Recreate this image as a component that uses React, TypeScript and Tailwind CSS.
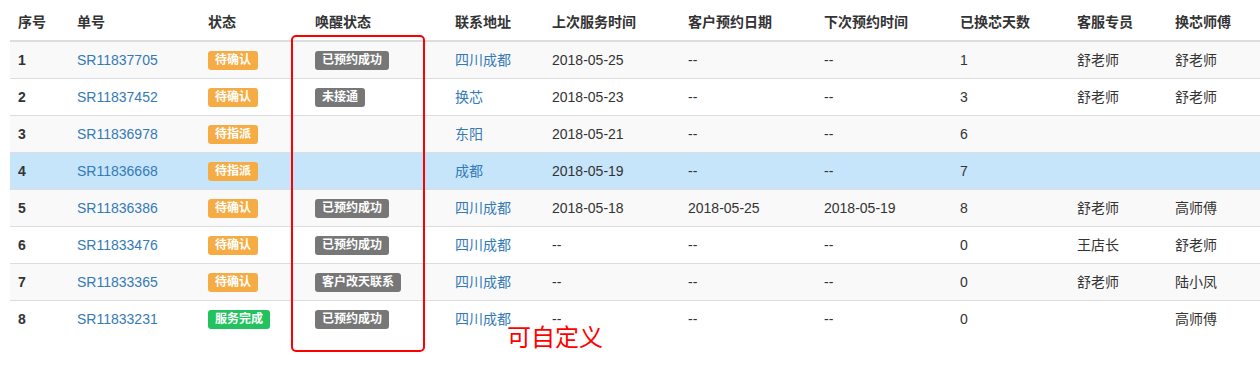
const font = { fontFamily: '"Liberation Sans", "Noto Sans CJK SC", sans-serif' };

type Row = {
  no: number;
  sr: string;
  status: string;
  wake?: string;
  addr: string;
  last: string;
  booked: string;
  next: string;
  days: number;
  cs?: string;
  tech?: string;
};

const rows: Row[] = [
  { no: 1, sr: 'SR11837705', status: '待确认', wake: '已预约成功', addr: '四川成都', last: '2018-05-25', booked: '--', next: '--', days: 1, cs: '舒老师', tech: '舒老师' },
  { no: 2, sr: 'SR11837452', status: '待确认', wake: '未接通', addr: '换芯', last: '2018-05-23', booked: '--', next: '--', days: 3, cs: '舒老师', tech: '舒老师' },
  { no: 3, sr: 'SR11836978', status: '待指派', addr: '东阳', last: '2018-05-21', booked: '--', next: '--', days: 6 },
  { no: 4, sr: 'SR11836668', status: '待指派', addr: '成都', last: '2018-05-19', booked: '--', next: '--', days: 7 },
  { no: 5, sr: 'SR11836386', status: '待确认', wake: '已预约成功', addr: '四川成都', last: '2018-05-18', booked: '2018-05-25', next: '2018-05-19', days: 8, cs: '舒老师', tech: '高师傅' },
  { no: 6, sr: 'SR11833476', status: '待确认', wake: '已预约成功', addr: '四川成都', last: '--', booked: '--', next: '--', days: 0, cs: '王店长', tech: '舒老师' },
  { no: 7, sr: 'SR11833365', status: '待确认', wake: '客户改天联系', addr: '四川成都', last: '--', booked: '--', next: '--', days: 0, cs: '舒老师', tech: '陆小凤' },
  { no: 8, sr: 'SR11833231', status: '服务完成', wake: '已预约成功', addr: '四川成都', last: '--', booked: '--', next: '--', days: 0, tech: '高师傅' },
];

const headers = ['序号', '单号', '状态', '唤醒状态', '联系地址', '上次服务时间', '客户预约日期', '下次预约时间', '已换芯天数', '客服专员', '换芯师傅'];
const widths = [59, 131, 107, 140, 97, 136, 136, 136, 117, 98, 93];

function Label({ text }: { text: string }) {
  const color =
    text === '服务完成' ? 'bg-[#22c35e]' : text.startsWith('待') ? 'bg-[#f5ac45]' : 'bg-[#777777]';
  return (
    <span className={`inline-block ${color} text-white font-bold text-[12px] leading-none pt-[3px] pb-[4px] px-[7px] rounded-[3px] align-[1px]`}>
      {text}
    </span>
  );
}

export default function App() {
  return (
    <div className="relative w-[1260px] h-[371px] bg-white overflow-hidden text-[14px] leading-[20px] text-[#333]" style={font}>
      <table className="table-fixed border-collapse ml-[10px] mt-[2px] w-[1250px] text-left">
        <colgroup>
          {widths.map((w, i) => (
            <col key={i} style={{ width: w }} />
          ))}
        </colgroup>
        <thead>
          <tr>
            {headers.map((h) => (
              <th key={h} className="px-[8px] pt-[10px] pb-[8px] font-semibold border-b-2 border-[#ddd] whitespace-nowrap">
                {h}
              </th>
            ))}
          </tr>
        </thead>
        <tbody>
          {rows.map((r, i) => {
            const bg = r.no === 4 ? 'bg-[#c6e5fa]' : i % 2 === 0 ? 'bg-[#f9f9f9]' : 'bg-white';
            const td = 'px-[8px] py-[8px] border-t border-[#ddd] whitespace-nowrap';
            return (
              <tr key={r.no} className={bg}>
                <td className={`${td} font-bold`}>{r.no}</td>
                <td className={`${td} text-[#337ab7]`}>{r.sr}</td>
                <td className={td}>
                  <Label text={r.status} />
                </td>
                <td className={td}>{r.wake ? <Label text={r.wake} /> : null}</td>
                <td className={`${td} text-[#337ab7]`}>{r.addr}</td>
                <td className={td}>{r.last}</td>
                <td className={td}>{r.booked}</td>
                <td className={td}>{r.next}</td>
                <td className={td}>{r.days}</td>
                <td className={td}>{r.cs ?? ''}</td>
                <td className={td}>{r.tech ?? ''}</td>
              </tr>
            );
          })}
        </tbody>
      </table>
      <div className="absolute left-[291px] top-[35px] w-[134px] h-[317px] border-2 border-[#f00] rounded-[5px]" />
      <div className="absolute left-[507px] top-[323px] text-[24px] leading-[30px] text-[#f00]">可自定义</div>
    </div>
  );
}
